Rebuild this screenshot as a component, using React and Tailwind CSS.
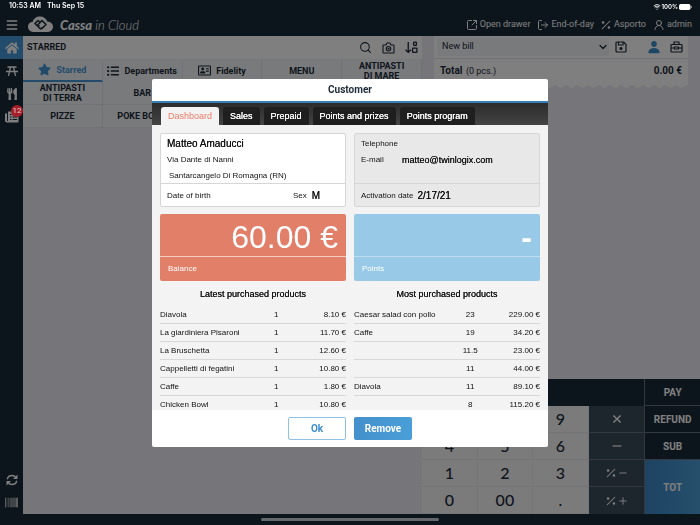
import { useId, useState } from 'react';
import { FaBarcode, FaHome, FaListUl, FaRegAddressCard, FaStar, FaUtensils } from 'react-icons/fa';
import { IoPerson, IoWifi } from 'react-icons/io5';
import { ChevronDown, LogOut, Menu, Search, SquareArrowOutUpRight, UserRound } from 'lucide-react';

const ROBOTO = "font-['Roboto',sans-serif]";
const HELVETICA = "font-['Liberation_Sans',Arial,sans-serif]";

// Liberation Sans has no medium weight, a flat shadow thickens the regular one
const MEDIUM = '[text-shadow:0_0_0_currentColor]';

const CATEGORIES = ['ANTIPASTI DI TERRA', 'BAR', 'PIZZE', 'POKE BOWL'];

const MODAL_TABS = ['Dashboard', 'Sales', 'Prepaid', 'Points and prizes', 'Points program'];

const LATEST_PRODUCTS = [
  { name: 'Diavola', quantity: '1', amount: '8.10 €' },
  { name: 'La giardiniera Pisaroni', quantity: '1', amount: '11.70 €' },
  { name: 'La Bruschetta', quantity: '1', amount: '12.60 €' },
  { name: 'Cappelletti di fegatini', quantity: '1', amount: '10.80 €' },
  { name: 'Caffe', quantity: '1', amount: '1.80 €' },
  { name: 'Chicken Bowl', quantity: '1', amount: '10.80 €' },
];

const MOST_PRODUCTS = [
  { name: 'Caesar salad con pollo', quantity: '23', amount: '229.00 €' },
  { name: 'Caffe', quantity: '19', amount: '34.20 €' },
  { name: '', quantity: '11.5', amount: '23.00 €' },
  { name: '', quantity: '11', amount: '44.00 €' },
  { name: 'Diavola', quantity: '11', amount: '89.10 €' },
  { name: '', quantity: '8', amount: '115.20 €' },
];

const DIGITS = ['7', '8', '9', '4', '5', '6', '1', '2', '3', '0', '00', '.'];

function CloudLogo() {
  return (
    <svg viewBox="0 0 50 34" className="h-[17px] w-[25px]" aria-hidden="true">
      <path
        d="M12 32C5 32 0 27.500 0 21.500 0 16 4 12 9.500 11.500 11 5 17 1 24 1c7 0 12.500 4 14.500 10C45 11.500 50 15.500 50 21.500 50 27.500 45 32 38.500 32z"
        fill="#fff"
      />
      <g fill="none" stroke="#1a2a38" strokeWidth="3.200" strokeLinejoin="round">
        <path d="M25 13l-5-4-6 6 11 11 3-3" />
        <path d="M23 20l-3-3 8-8 8 8-9 9" />
      </g>
    </svg>
  );
}

function PercentIcon({ className }) {
  return (
    <svg viewBox="0 0 24 24" className={className} fill="currentColor" aria-hidden="true">
      <path d="M3 21L21 3" stroke="currentColor" strokeWidth="2.500" strokeLinecap="round" />
      <circle cx="5" cy="6" r="3" />
      <circle cx="19" cy="18" r="3" />
    </svg>
  );
}

function PicnicTableIcon() {
  return (
    <svg viewBox="0 0 24 20" className="h-[10px] w-3" fill="none" stroke="currentColor" strokeWidth="2.600" aria-hidden="true">
      <path d="M3 2h18M0 11h24M9 2L5 20M15 2l4 18" />
    </svg>
  );
}

function OrdersIcon() {
  return (
    <svg viewBox="0 0 28 24" className="h-3 w-[14px]" fill="currentColor" aria-hidden="true">
      <path
        fillRule="evenodd"
        d="M6 1h19a2 2 0 0 1 2 2v18a2 2 0 0 1-2 2H4a4 4 0 0 1-4-4V5h4v14a1 1 0 0 0 2 0zM10 6v2h3V6zM15 6v2h9V6zM10 11v2h3v-2zM15 11v2h9v-2zM10 16v2h3v-2zM15 16v2h9v-2z"
      />
    </svg>
  );
}

function CameraIcon() {
  return (
    <svg viewBox="0 0 26 24" className="h-3 w-[13px]" fill="none" stroke="currentColor" strokeWidth="2.200" strokeLinejoin="round" aria-hidden="true">
      <path d="M2 7a1 1 0 0 1 1-1h5l2-4h6l2 4h5a1 1 0 0 1 1 1v14a1 1 0 0 1-1 1H3a1 1 0 0 1-1-1z" />
      <circle cx="13" cy="13.500" r="4.500" />
      <circle cx="13" cy="13.500" r="1" />
    </svg>
  );
}

function SortIcon() {
  return (
    <svg viewBox="0 0 24 24" className="size-[13px]" fill="none" stroke="currentColor" strokeWidth="2.400" aria-hidden="true">
      <path d="M6 2v19M1 16l5 5 5-5" />
      <rect x="16" y="2" width="5" height="6" rx="1" />
      <rect x="14" y="13" width="8" height="8" rx="1" />
    </svg>
  );
}

function SaveIcon() {
  return (
    <svg viewBox="0 0 24 24" className="size-3" fill="none" stroke="currentColor" strokeWidth="2.400" strokeLinejoin="round" aria-hidden="true">
      <path d="M2 4a2 2 0 0 1 2-2h13l5 5v13a2 2 0 0 1-2 2H4a2 2 0 0 1-2-2z" />
      <path d="M7 2v6h9V2" />
      <circle cx="12" cy="15" r="2" fill="currentColor" />
    </svg>
  );
}

function BriefcaseIcon() {
  return (
    <svg viewBox="0 0 26 24" className="h-3 w-[13px]" fill="none" stroke="currentColor" strokeWidth="2.400" strokeLinejoin="round" aria-hidden="true">
      <rect x="2" y="7" width="22" height="15" rx="1.500" />
      <path d="M8 7V2h10v5M2 14h7M17 14h7" />
      <rect x="9" y="12" width="8" height="4" />
    </svg>
  );
}

function SyncIcon() {
  return (
    <svg viewBox="0 0 24 24" className="size-3" fill="none" stroke="currentColor" strokeWidth="2.800" aria-hidden="true">
      <path d="M2.500 10.500C3.500 6 7.500 3 12 3c3.500 0 6 1.500 8 4M21.500 13.500C20.500 18 16.500 21 12 21c-3.500 0-6-1.500-8-4" />
      <path d="M23 1v9h-9zM1 23v-9h9z" fill="currentColor" stroke="none" />
    </svg>
  );
}

function BatteryIcon() {
  return (
    <svg viewBox="0 0 26 12" className="h-[6px] w-[13px]" aria-hidden="true">
      <rect x="0" y="0" width="23" height="12" rx="3.500" fill="#fff" />
      <path d="M24 4c2 .5 2 3.500 0 4z" fill="#fff" />
    </svg>
  );
}

function OperatorIcon({ d, className }) {
  return (
    <svg viewBox="0 0 20 20" className={className} fill="none" stroke="currentColor" strokeWidth="2.400" aria-hidden="true">
      <path d={d} />
    </svg>
  );
}

function PaperEdge() {
  const id = useId();
  return (
    <svg className="block h-[6px] w-full" aria-hidden="true">
      <defs>
        <pattern id={id} width="11" height="6" patternUnits="userSpaceOnUse">
          <path d="M0 0H11V3C9 3 7.500 6 5.500 6S2 3 0 3z" fill="#fff" />
        </pattern>
      </defs>
      <rect width="100%" height="6" fill={`url(#${id})`} />
    </svg>
  );
}

function StatusBar() {
  return (
    <div className="relative z-20 flex h-[13px] items-center justify-between pr-2 pl-[9px] font-['Inter',sans-serif] text-[7px] font-semibold text-white">
      <div className="flex gap-[6px]">
        <span>10:53 AM</span>
        <span>Thu Sep 15</span>
      </div>
      <div className="flex items-center gap-px">
        <IoWifi className="size-2" />
        <span className="text-[6px]">100%</span>
        <BatteryIcon />
      </div>
    </div>
  );
}

function Header() {
  return (
    <header className="flex h-[23px] items-center justify-between pr-2 pl-[5px] text-white">
      <div className="flex items-center">
        <button type="button" aria-label="Menu">
          <Menu className="size-[14px]" strokeWidth={2.5} />
        </button>
        <div className="ml-[9px] flex items-center gap-[7px]">
          <CloudLogo />
          <p className="font-['Lato',sans-serif] text-[13px] leading-4 italic">
            <span className="font-black">Cassa</span> <span className="font-light">in Cloud</span>
          </p>
        </div>
      </div>
      <nav className="flex items-center gap-[7px] text-[9px]">
        <button type="button" className="flex items-center gap-[2px]">
          <SquareArrowOutUpRight className="size-3" />
          Open drawer
        </button>
        <button type="button" className="flex items-center gap-[2px]">
          <LogOut className="size-3" />
          End-of-day
        </button>
        <button type="button" className="flex items-center gap-[3px]">
          <PercentIcon className="size-[10px]" />
          Asporto
        </button>
        <button type="button" className="flex items-center gap-[2px]">
          <UserRound className="size-3" />
          admin
        </button>
      </nav>
    </header>
  );
}

function Sidebar() {
  return (
    <aside className="flex w-[23px] shrink-0 flex-col text-white">
      <button type="button" aria-label="Home" className="flex h-[23px] items-center justify-center bg-[#4699d8]">
        <FaHome className="size-[14px]" />
      </button>
      <button type="button" aria-label="Tables" className="flex h-[23px] items-center justify-center">
        <PicnicTableIcon />
      </button>
      <button type="button" aria-label="Kitchen" className="flex h-[23px] items-center justify-center">
        <FaUtensils className="size-3" />
      </button>
      <button type="button" aria-label="Orders" className="relative flex h-[23px] items-center justify-center">
        <OrdersIcon />
        <span className="absolute top-0 right-0 z-20 flex size-3 items-center justify-center rounded-full bg-[#a81e28] text-[8px] text-[#d8d8d8]">
          12
        </span>
      </button>
      <button type="button" aria-label="Sync" className="mt-auto flex h-[23px] items-center justify-center">
        <SyncIcon />
      </button>
      <button type="button" aria-label="Barcode" className="flex h-[23px] items-center justify-center">
        <FaBarcode className="size-[13px]" />
      </button>
    </aside>
  );
}

function Catalog() {
  const tab = 'flex items-center justify-center border-r border-[#e2e5ea] text-center leading-[10px]';
  return (
    <section className="flex flex-col text-[#1c2b3a]">
      <div className="flex h-[23px] items-center justify-between bg-white pr-1 pl-1">
        <h1 className="text-[9px] font-bold">STARRED</h1>
        <div className="flex items-center gap-[10px]">
          <button type="button" aria-label="Search"><Search className="size-[13px]" /></button>
          <button type="button" aria-label="Camera"><CameraIcon /></button>
          <button type="button" aria-label="Sort"><SortIcon /></button>
        </div>
      </div>
      <div className="grid auto-rows-[23px] grid-cols-5 bg-[#f1f4f8] text-[9px] font-bold">
        <button type="button" className={`${tab} gap-[5px] border-b-2 border-b-[#4699d8] text-[#4699d8]`}>
          <FaStar className="size-[13px]" />
          Starred
        </button>
        <button type="button" className={`${tab} gap-[5px]`}>
          <FaListUl className="size-3" />
          Departments
        </button>
        <button type="button" className={`${tab} gap-[5px]`}>
          <FaRegAddressCard className="size-[13px]" />
          Fidelity
        </button>
        <button type="button" className={tab}>MENU</button>
        <button type="button" className={tab}>
          <span className="w-12">ANTIPASTI DI MARE</span>
        </button>
        {CATEGORIES.map((category, index) => (
          <button
            key={category}
            type="button"
            className={`${tab} border-b ${index % 2 === 0 ? 'col-start-1' : 'col-start-2'}`}
          >
            <span className={category.startsWith('ANTIPASTI') ? 'w-12' : ''}>{category}</span>
          </button>
        ))}
      </div>
    </section>
  );
}

function Bill() {
  return (
    <section className="mr-3 ml-3 text-[#1c2b3a]">
      <div className="flex h-[23px] items-center border-b border-[#e2e5ea] bg-white pr-[5px] pl-[3px]">
        <div className="relative flex flex-1 items-center">
          <select
            aria-label="Bill"
            className="h-[18px] w-full appearance-none rounded-xs bg-[#f1f4f8] pl-[5px] text-[9px]"
          >
            <option>New bill</option>
          </select>
          <ChevronDown className="pointer-events-none absolute right-0 size-3" strokeWidth={2.5} />
        </div>
        <button type="button" aria-label="Save" className="ml-[6px]"><SaveIcon /></button>
        <button type="button" aria-label="Customer" className="ml-5 text-[#3d8fcc]"><IoPerson className="size-[14px]" /></button>
        <button type="button" aria-label="Items" className="ml-[9px]"><BriefcaseIcon /></button>
      </div>
      <div className="flex h-[23px] items-center justify-between bg-white px-[6px] text-[10px]">
        <p>
          <span className="font-bold">Total</span> <span className="pl-px text-[9px]">(0 pcs.)</span>
        </p>
        <p className="font-bold">0.00 €</p>
      </div>
      <PaperEdge />
    </section>
  );
}

function Keypad() {
  const operation = 'flex items-center justify-center gap-[3px] bg-[#3a4c5b]';
  const action = 'bg-[#1a2a38]';
  return (
    <section className="mt-auto grid auto-rows-[27px] grid-cols-5 text-white">
      <div className="col-span-4 bg-[#1a2a38]" />
      <div className="col-start-5 row-span-5 row-start-1 grid auto-rows-[27px] divide-y divide-[#66727d] border-l border-[#66727d] text-[10px] font-bold">
        <button type="button" className={action}>PAY</button>
        <button type="button" className={action}>REFUND</button>
        <button type="button" className={action}>SUB</button>
        <button type="button" className="row-span-2 bg-linear-to-r from-[#3d86c6] to-[#4ba0d8]">TOT</button>
      </div>
      <div className="col-span-3 row-span-4 grid auto-rows-[27px] grid-cols-3 font-['Lato',sans-serif] text-[16px] leading-5 font-medium text-[#1c2b3a]">
        {DIGITS.map((digit) => (
          <button key={digit} type="button" className="border-r border-b border-[#e8eaee] bg-[#f6f7f9]">{digit}</button>
        ))}
      </div>
      <div className="row-span-4 grid auto-rows-[27px] divide-y divide-[#66727d]">
        <button type="button" aria-label="Multiply" className={operation}>
          <OperatorIcon d="M4 4l12 12M16 4L4 16" className="size-3" />
        </button>
        <button type="button" aria-label="Subtract" className={operation}>
          <OperatorIcon d="M1 10h18" className="size-[10px]" />
        </button>
        <button type="button" aria-label="Discount" className={operation}>
          <PercentIcon className="size-[10px]" />
          <OperatorIcon d="M1 10h18" className="size-2" />
        </button>
        <button type="button" aria-label="Surcharge" className={operation}>
          <PercentIcon className="size-[10px]" />
          <OperatorIcon d="M1 10h18M10 1v18" className="size-2" />
        </button>
      </div>
    </section>
  );
}

function ProductTable({ title, products }) {
  const cell = 'h-[18px] border-b border-[#d8d8d8] px-0 pt-px pb-0';
  return (
    <table className="w-full table-fixed border-separate border-spacing-0 text-[8px] leading-[10px]">
      <caption className={`text-[9px] leading-6 ${MEDIUM}`}>{title}</caption>
      <colgroup>
        <col className="w-[54%]" />
        <col className="w-[17%]" />
        <col className="w-[29%]" />
      </colgroup>
      <tbody>
        {products.map((product, index) => (
          <tr key={index}>
            <td className={`${cell} whitespace-nowrap`}>{product.name}</td>
            <td className={`${cell} text-center`}>{product.quantity}</td>
            <td className={`${cell} text-right`}>{product.amount}</td>
          </tr>
        ))}
      </tbody>
    </table>
  );
}

function CustomerModal() {
  const [activeTab, setActiveTab] = useState('Dashboard');

  return (
    <div className="fixed inset-0 z-10 flex items-center justify-center bg-black/50">
      <div role="dialog" aria-labelledby="customer-title" className="w-full max-w-[396px] overflow-hidden rounded-xs bg-white text-[#111]">
        <h2 id="customer-title" className="border-b-2 border-[#3580b8] text-center text-[10px] leading-[22px] font-bold text-[#1c2b3a]">
          Customer
        </h2>
        <div className={`${HELVETICA} bg-[#f3f3f3]`}>
          <div role="tablist" className="flex gap-1 bg-linear-to-b from-[#2c2c2c] to-[#444] px-[9px] pt-1">
            {MODAL_TABS.map((tab) => (
              <button
                key={tab}
                type="button"
                role="tab"
                aria-selected={tab === activeTab}
                onClick={() => setActiveTab(tab)}
                className={`rounded-t-[3px] px-[7px] text-[9px] leading-[18px] ${
                  tab === activeTab ? 'bg-[#f3f3f3] text-[#ee7b66]' : `bg-[#1f1f1f] text-white ${MEDIUM}`
                }`}
              >
                {tab}
              </button>
            ))}
          </div>

          <div className="h-[285px] overflow-hidden px-2 pt-2">
            <div className="grid grid-cols-2 gap-x-2 gap-y-[7px]">
              <div className="rounded-xs border border-[#d6d6d6] bg-white text-[8px]">
                <div className="h-[50px] border-b border-[#d6d6d6] px-[6px] pt-[2px] leading-4">
                  <p className={`text-[10px] ${MEDIUM}`}>Matteo Amaducci</p>
                  <p>Via Dante di Nanni</p>
                  <p className="pl-[2px]">Santarcangelo Di Romagna (RN)</p>
                </div>
                <div className="flex h-[22px] items-center justify-between px-[6px] pt-[2px]">
                  <span>Date of birth</span>
                  <span className="flex w-[46px] items-center gap-[5px]">
                    Sex <span className={`text-[10px] ${MEDIUM}`}>M</span>
                  </span>
                </div>
              </div>

              <div className="rounded-xs border border-[#d6d6d6] bg-[#e8e8e8] text-[8px]">
                <div className="h-[50px] border-b border-[#d6d6d6] px-[6px] pt-[2px] leading-4">
                  <p>Telephone</p>
                  <p className="flex">
                    <span className="w-[41px]">E-mail</span>
                    <span className={`text-[9px] ${MEDIUM}`}>matteo@twinlogix.com</span>
                  </p>
                </div>
                <div className="flex h-[22px] items-center gap-1 px-[6px] pt-[2px]">
                  Activation date <span className={`text-[10px] ${MEDIUM}`}>2/17/21</span>
                </div>
              </div>

              <div className="rounded-xs bg-[#e27f69] text-white">
                <p className="h-[43px] border-b border-white/60 px-2 text-right text-[32px] leading-[46px]">60.00 €</p>
                <p className="px-2 text-[8px] leading-6">Balance</p>
              </div>
              <div className="rounded-xs bg-[#98c9e6] text-white">
                <p className="h-[43px] border-b border-white/40 px-2 text-right text-[32px] leading-[46px] font-bold">-</p>
                <p className="px-2 text-[8px] leading-6">Points</p>
              </div>
            </div>

            <div className="grid grid-cols-2 gap-x-2 pt-px">
              <ProductTable title="Latest purchased products" products={LATEST_PRODUCTS} />
              <ProductTable title="Most purchased products" products={MOST_PRODUCTS} />
            </div>
          </div>
        </div>

        <div className="flex h-[37px] items-center justify-center gap-2 text-[10px] font-bold">
          <button type="button" className="h-[23px] w-[58px] rounded-xs border border-[#8fc2e8] text-[#3f8fd0]">Ok</button>
          <button type="button" className="h-[23px] w-[58px] rounded-xs bg-linear-to-r from-[#4390cc] to-[#4a9fd8] text-white">
            Remove
          </button>
        </div>
      </div>
    </div>
  );
}

export default function App() {
  return (
    <div className={`${ROBOTO} flex h-screen flex-col bg-[#1a2a38]`}>
      <StatusBar />
      <Header />
      <div className="flex min-h-0 flex-1">
        <Sidebar />
        <main className="grid flex-1 grid-cols-[399fr_278fr] bg-[#ecedf4]">
          <Catalog />
          <div className="flex flex-col">
            <Bill />
            <Keypad />
          </div>
        </main>
      </div>
      <footer className="relative z-20 flex h-[11px] items-center justify-center">
        <span className="h-[3px] w-[178px] rounded-full bg-[#65696d]" />
      </footer>
      <CustomerModal />
    </div>
  );
}
